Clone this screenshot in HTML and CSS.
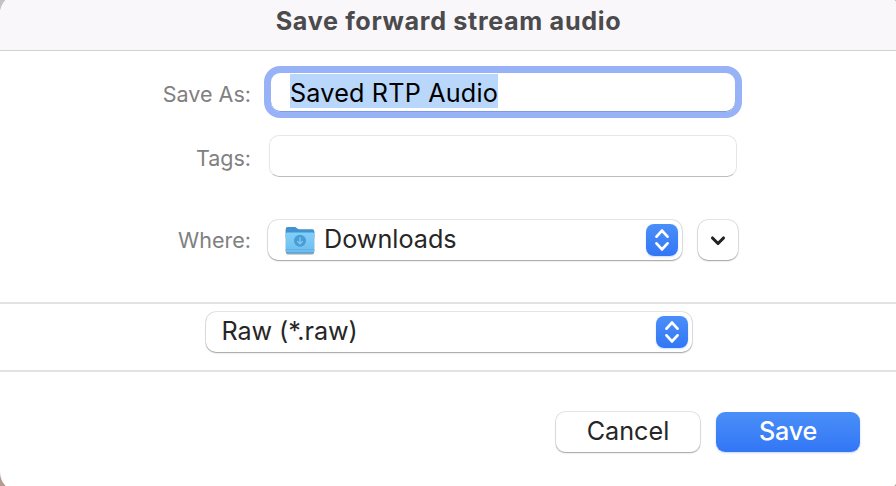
FILE: index.html
```
<!DOCTYPE html>
<html lang="en">
<head>
<meta charset="utf-8">
<title>Save forward stream audio</title>
<link rel="stylesheet" href="styles.css">
</head>
<body>
<main class="sheet">
  <header class="titlebar"><h1 class="title">Save forward stream audio</h1></header>
  <section class="form">
    <div class="row row-name">
      <span class="label label-name">Save As:</span>
      <div class="field field-focus"><span class="selection">Saved RTP Audio</span></div>
    </div>
    <div class="row row-tags">
      <span class="label label-tags">Tags:</span>
      <div class="field field-tags"></div>
    </div>
    <div class="row row-where">
      <span class="label label-where">Where:</span>
      <div class="control popup popup-where">
        <svg class="folder" viewBox="0 0 30 30">
          <defs>
            <linearGradient id="front" x1="0" y1="0" x2="0" y2="1"><stop offset="0" stop-color="#83cffa"/><stop offset="1" stop-color="#6bbcee"/></linearGradient>
          </defs>
          <path d="M.7 3.2Q.7 1 2.7 1H9c1.6 0 2 .3 3 1.2.9.8 1.5 1 3 1h12.3q2 0 2 2V11H.7z" fill="#3f93d0"/>
          <path d="M.7 8Q.7 6.4 2.3 6.4h25.4q1.6 0 1.6 1.6v17.3q0 2-2 2H2.7q-2 0-2-2z" fill="url(#front)"/>
          <path d="M.7 23h28.6v1H.7z" fill="#62b1e5"/>
          <path d="M1 26.2q.5 1.2 1.7 1.2h24.6q1.2 0 1.7-1.2z" fill="#559fd0"/>
          <circle cx="15" cy="14.8" r="6" fill="#479dd4"/>
          <path d="M15 11.3v6.4M12.2 15.1 15 17.9l2.8-2.8" fill="none" stroke="#83caf4" stroke-width="1.3"/>
        </svg>
        <span class="text text-where">Downloads</span>
        <span class="stepper"><svg viewBox="0 0 32 32"><path d="m10.5 12.6 5.5-6 5.5 6M10.5 19.4l5.5 6 5.5-6"/></svg></span>
      </div>
      <button class="control expand" aria-label="Expand"><svg viewBox="0 0 40 40"><path d="m14.5 18 5.5 5.5 5.5-5.5"/></svg></button>
    </div>
  </section>
  <section class="format">
    <div class="control popup popup-format">
      <span class="text text-format">Raw (*.raw)</span>
      <span class="stepper"><svg viewBox="0 0 32 32"><path d="m10.5 12.6 5.5-6 5.5 6M10.5 19.4l5.5 6 5.5-6"/></svg></span>
    </div>
  </section>
  <footer class="actions">
    <button class="control button cancel">Cancel</button>
    <button class="button save">Save</button>
  </footer>
</main>
</body>
</html>
```
FILE: styles.css
```
* { box-sizing: border-box; }
html, body { margin: 0; width: 896px; height: 486px; overflow: hidden; }
body {
  background: linear-gradient(#c4c2c3 0, #c4c2c3 2%, #b59c8c 100%);
  font-family: Inter, "Liberation Sans", sans-serif;
  font-size: 25.2px;
  color: #262626;
}
.sheet {
  width: 900px;
  height: 498px;
  margin: -6px 0 0;
  border-radius: 20px;
  overflow: hidden;
  background: #fff;
}
.titlebar {
  height: 57px;
  padding: 6px 3px 0 0;
  background: #f9f7fa;
  border-bottom: 1px solid #d2d1d3;
  display: flex;
  justify-content: center;
}
.title { margin: 0; font-size: 25.2px; line-height: 42px; font-weight: 700; letter-spacing: .65px; color: #4b4a4c; white-space: nowrap; }
.form { height: 251px; padding-top: 15px; }
.row { display: flex; align-items: center; }
.row-name { height: 52px; }
.row-tags { height: 42px; margin-top: 17px; }
.row-where { height: 42px; margin-top: 42px; }
.label { width: 251px; margin-right: 13px; text-align: right; font-size: 21.5px; color: #808080; white-space: nowrap; padding-top: 4px; }
.label-tags { margin-right: 18px; padding-top: 3px; }
.label-where { margin-right: 16.5px; padding-top: 0; }
.field { background: #fff; }
.field-focus {
  width: 478px;
  height: 52px;
  border: 7px solid #97b2f7;
  border-bottom-width: 6px;
  border-radius: 16px;
  padding: 1px 0 0 19px;
  color: #000;
  box-shadow: inset 0 -1px 0 #7f9be0;
}
.selection { display: inline-block; height: 34px; line-height: 39px; letter-spacing: .18px; background: #b9d6fb; white-space: nowrap; }
.field-tags { width: 468px; height: 42px; border: 1px solid #e6e6e6; border-bottom-color: #bdbdbd; border-radius: 10px; }
.control { background: #fff; box-shadow: 0 0 0 .7px rgba(0,0,0,.13), 0 1px 1.5px rgba(0,0,0,.3); }
.popup { height: 40px; border-radius: 10px; display: flex; align-items: center; }
.popup-where { width: 414px; padding: 0 4px 0 17px; }
.folder { width: 30px; height: 30px; margin: 1px 9.5px 0 0; filter: drop-shadow(0 1px .7px rgba(0,0,0,.3)); }
.text { white-space: nowrap; line-height: 38px; height: 40px; }
.text-format { letter-spacing: -.08px; }
.stepper { width: 32px; height: 32px; margin-left: auto; border-radius: 8px; background: linear-gradient(#4a8ff8, #3376f6); box-shadow: 0 1px 2px rgba(51,118,246,.25); }
.stepper svg { display: block; fill: none; stroke: #fff; stroke-width: 2.8; stroke-linecap: round; stroke-linejoin: round; }
.expand { width: 40px; height: 40px; margin-left: 16px; padding: 0; border: 0; border-radius: 10px; }
.expand svg { display: block; fill: none; stroke: #222; stroke-width: 3.1; stroke-linecap: round; stroke-linejoin: round; }
.format { height: 70px; border-top: 2px solid #e2e2e2; border-bottom: 2px solid #e2e2e2; padding: 8px 0 0 206px; }
.popup-format { width: 486px; padding: 0 4px 0 15.5px; }
.actions { display: flex; justify-content: flex-end; gap: 16px; padding: 40px 40px 0 0; }
.button { width: 144px; height: 40px; border: 0; border-radius: 9px; padding: 0 0 2px; font: 25.2px/38px Inter, "Liberation Sans", sans-serif; color: #262626; }
.save { color: #fff; font-weight: 500; letter-spacing: -.2px; background: linear-gradient(#4a8ff8, #3376f6); box-shadow: 0 1px 2px rgba(51,118,246,.3); }
```
